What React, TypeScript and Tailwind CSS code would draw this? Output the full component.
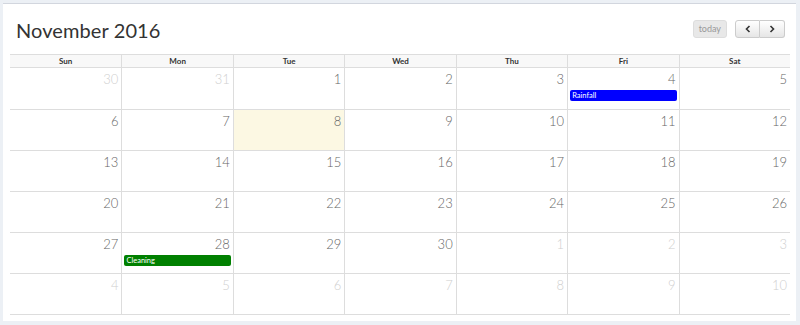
import React from "react"

const days = ["Sun", "Mon", "Tue", "Wed", "Thu", "Fri", "Sat"]

type Cell = { n: number; other?: boolean; today?: boolean }

const weeks: Cell[][] = [
  [{ n: 30, other: true }, { n: 31, other: true }, { n: 1 }, { n: 2 }, { n: 3 }, { n: 4 }, { n: 5 }],
  [{ n: 6 }, { n: 7 }, { n: 8, today: true }, { n: 9 }, { n: 10 }, { n: 11 }, { n: 12 }],
  [{ n: 13 }, { n: 14 }, { n: 15 }, { n: 16 }, { n: 17 }, { n: 18 }, { n: 19 }],
  [{ n: 20 }, { n: 21 }, { n: 22 }, { n: 23 }, { n: 24 }, { n: 25 }, { n: 26 }],
  [{ n: 27 }, { n: 28 }, { n: 29 }, { n: 30 }, { n: 1, other: true }, { n: 2, other: true }, { n: 3, other: true }],
  [{ n: 4, other: true }, { n: 5, other: true }, { n: 6, other: true }, { n: 7, other: true }, { n: 8, other: true }, { n: 9, other: true }, { n: 10, other: true }],
]

const events: Record<string, { title: string; color: string }> = {
  "0-5": { title: "Rainfall", color: "bg-[#0000ff]" },
  "4-1": { title: "Cleaning", color: "bg-[#008000]" },
}

export default function App() {
  return (
    <div className="w-[800px] h-[325px] bg-[#ecf0f5] pt-[3px] pl-[3px] font-['Lato','Open_Sans',sans-serif]">
      <div className="w-[793px] h-[318px] bg-white border-t border-[#d2d6de] px-[7px]">
        <div className="flex items-center justify-between pt-[15px] pb-[13px] pl-[6px] pr-[4px]">
          <h2 className="text-[20px] leading-[22px] text-[#333] tracking-[0.1px]">November 2016</h2>
          <div className="flex items-center gap-[8px] -mt-[3px]">
            <button className="h-[18px] px-[5px] text-[9px] text-[#999] bg-[#e8e8e8] border border-[#ddd] rounded-[3px]">
              today
            </button>
            <div className="flex">
              <button className="w-[25px] h-[18px] flex items-center justify-center bg-gradient-to-b from-white to-[#e6e6e6] border border-[#ccc] rounded-l-[3px]">
                <svg width="8" height="8" viewBox="0 0 8 8"><path d="M5.5 1 L2.5 4 L5.5 7" fill="none" stroke="#333" strokeWidth="1.6" /></svg>
              </button>
              <button className="w-[25px] h-[18px] flex items-center justify-center bg-gradient-to-b from-white to-[#e6e6e6] border border-l-0 border-[#ccc] rounded-r-[3px]">
                <svg width="8" height="8" viewBox="0 0 8 8"><path d="M2.5 1 L5.5 4 L2.5 7" fill="none" stroke="#333" strokeWidth="1.6" /></svg>
              </button>
            </div>
          </div>
        </div>

        <div className="w-[780px] border-b border-[#ddd]">
          <div className="grid grid-cols-7 border-t border-[#ddd] bg-[#f8f8f8]">
            {days.map((d, i) => (
              <div
                key={d}
                className={`h-[13px] flex items-center justify-center text-[8px] font-bold text-[#333] border-b border-[#ddd] ${i > 0 ? "border-l" : ""}`}
              >
                {d}
              </div>
            ))}
          </div>
          {weeks.map((w, wi) => (
            <div key={wi} className={`grid grid-cols-7 h-[41px] ${wi > 0 ? "border-t border-[#ddd]" : ""}`}>
              {w.map((c, ci) => {
                const ev = events[`${wi}-${ci}`]
                return (
                  <div
                    key={ci}
                    className={`relative ${ci > 0 ? "border-l border-[#ddd]" : ""} ${c.today ? "bg-[#fcf8e3]" : ""}`}
                  >
                    <div
                      className={`text-right pr-[3px] pt-[3px] text-[13px] leading-[16px] font-light ${c.other ? "text-[#cfcfcf]" : "text-[#666]"}`}
                    >
                      {c.n}
                    </div>
                    {ev && (
                      <div className={`mx-[2px] mt-[3px] h-[11px] rounded-[2px] ${ev.color} text-white text-[7.5px] leading-[11px] pl-[2px]`}>
                        {ev.title}
                      </div>
                    )}
                  </div>
                )
              })}
            </div>
          ))}
        </div>
      </div>
    </div>
  )
}
